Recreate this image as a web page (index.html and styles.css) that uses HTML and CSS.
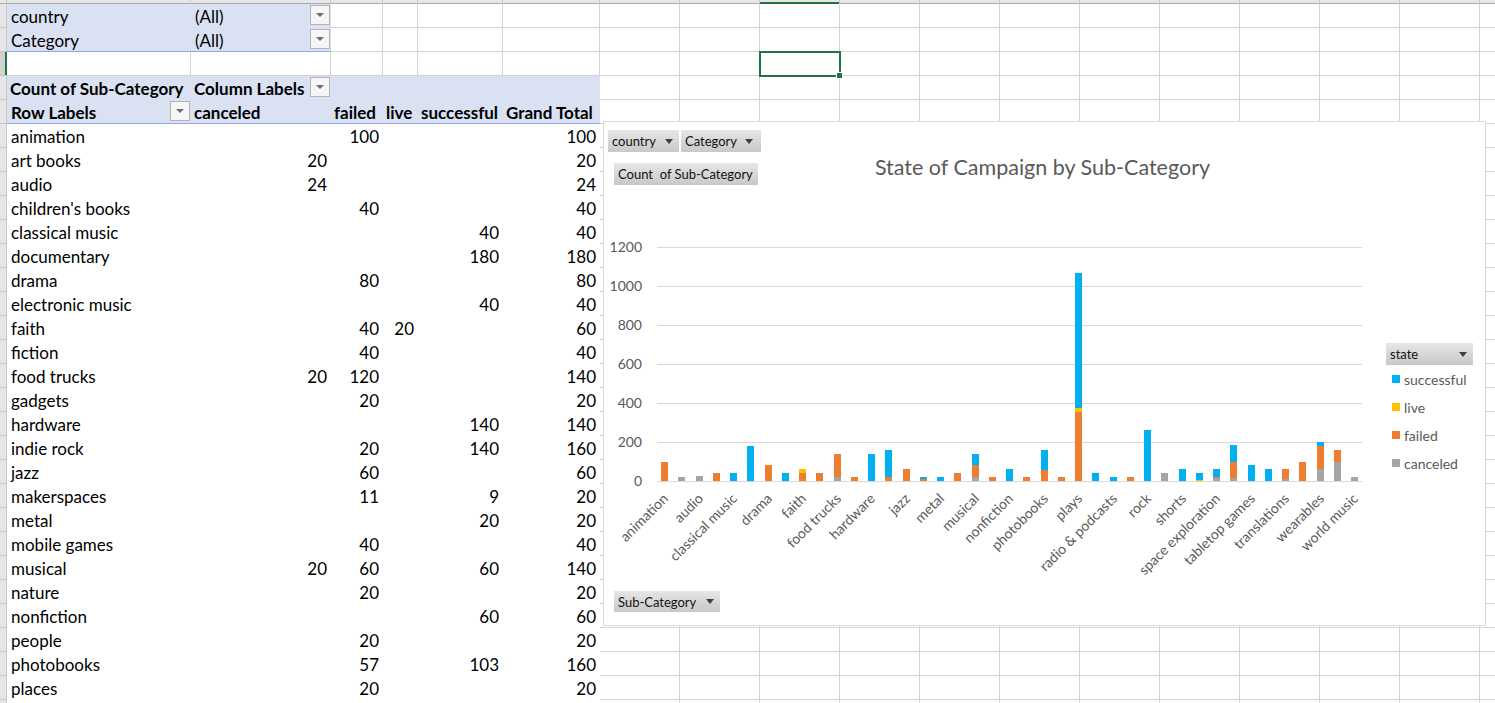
FILE: index.html
```html
<!DOCTYPE html>
<html lang="en">
<head>
    <meta charset="UTF-8">
    <meta name="viewport" content="width=device-width, initial-scale=1.0">
    <title>State of Campaign by Sub-Category</title>
    <link rel="stylesheet" href="styles.css">
</head>
<body>
<div class="sheet">
    <div class="col-heads">
        <span class="corner"></span>
        <span class="ca"></span><span class="cb"></span><span class="cc"></span><span class="cd"></span><span class="ce"></span><span class="cf"></span>
        <span class="cg"></span><span class="cg"></span><span class="cg cur"></span><span class="cg"></span><span class="cg"></span><span class="cg"></span>
        <span class="cg"></span><span class="cg"></span><span class="cg"></span><span class="cg"></span><span class="cg"></span><span class="cg"></span>
    </div>
    <div class="sheet-body">
        <div class="row-heads">
            <span class="rh"></span>
            <span class="rh"></span>
            <span class="rh cur"></span>
            <span class="rh-rest"></span>
        </div>
        <div class="cells">
            <table class="pivot">
                <colgroup>
                    <col class="ca"><col class="cb"><col class="cc"><col class="cd"><col class="ce"><col class="cf">
                </colgroup>
                <tr class="filter">
                    <td class="fl">country</td>
                    <td class="fl dd-cell"><div class="fc"><span>(All)</span><i class="dd"></i></div></td>
                    <td class="g"></td><td class="g"></td><td class="g"></td><td class="g"></td>
                </tr>
                <tr class="filter last">
                    <td class="fl">Category</td>
                    <td class="fl dd-cell"><div class="fc"><span>(All)</span><i class="dd"></i></div></td>
                    <td class="g"></td><td class="g"></td><td class="g"></td><td class="g"></td>
                </tr>
                <tr>
                    <td class="g"></td><td class="g"></td><td class="g"></td><td class="g"></td><td class="g"></td><td class="g"></td>
                </tr>
                <tr class="hd">
                    <td>Count of Sub-Category</td>
                    <td class="dd-cell"><div class="fc"><span>Column Labels</span><i class="dd"></i></div></td>
                    <td></td><td></td><td></td><td></td>
                </tr>
                <tr class="hd last">
                    <td class="dd-cell"><div class="fc"><span>Row Labels</span><i class="dd"></i></div></td>
                    <td>canceled</td>
                    <td>failed</td>
                    <td>live</td>
                    <td>successful</td>
                    <td>Grand Total</td>
                </tr>
                <tr class="d"><td>animation</td><td></td><td class="n">100</td><td></td><td></td><td class="n">100</td></tr>
                <tr class="d"><td>art books</td><td class="n">20</td><td></td><td></td><td></td><td class="n">20</td></tr>
                <tr class="d"><td>audio</td><td class="n">24</td><td></td><td></td><td></td><td class="n">24</td></tr>
                <tr class="d"><td>children's books</td><td></td><td class="n">40</td><td></td><td></td><td class="n">40</td></tr>
                <tr class="d"><td>classical music</td><td></td><td></td><td></td><td class="n">40</td><td class="n">40</td></tr>
                <tr class="d"><td>documentary</td><td></td><td></td><td></td><td class="n">180</td><td class="n">180</td></tr>
                <tr class="d"><td>drama</td><td></td><td class="n">80</td><td></td><td></td><td class="n">80</td></tr>
                <tr class="d"><td>electronic music</td><td></td><td></td><td></td><td class="n">40</td><td class="n">40</td></tr>
                <tr class="d"><td>faith</td><td></td><td class="n">40</td><td class="n">20</td><td></td><td class="n">60</td></tr>
                <tr class="d"><td>fiction</td><td></td><td class="n">40</td><td></td><td></td><td class="n">40</td></tr>
                <tr class="d"><td>food trucks</td><td class="n">20</td><td class="n">120</td><td></td><td></td><td class="n">140</td></tr>
                <tr class="d"><td>gadgets</td><td></td><td class="n">20</td><td></td><td></td><td class="n">20</td></tr>
                <tr class="d"><td>hardware</td><td></td><td></td><td></td><td class="n">140</td><td class="n">140</td></tr>
                <tr class="d"><td>indie rock</td><td></td><td class="n">20</td><td></td><td class="n">140</td><td class="n">160</td></tr>
                <tr class="d"><td>jazz</td><td></td><td class="n">60</td><td></td><td></td><td class="n">60</td></tr>
                <tr class="d"><td>makerspaces</td><td></td><td class="n">11</td><td></td><td class="n">9</td><td class="n">20</td></tr>
                <tr class="d"><td>metal</td><td></td><td></td><td></td><td class="n">20</td><td class="n">20</td></tr>
                <tr class="d"><td>mobile games</td><td></td><td class="n">40</td><td></td><td></td><td class="n">40</td></tr>
                <tr class="d"><td>musical</td><td class="n">20</td><td class="n">60</td><td></td><td class="n">60</td><td class="n">140</td></tr>
                <tr class="d"><td>nature</td><td></td><td class="n">20</td><td></td><td></td><td class="n">20</td></tr>
                <tr class="d"><td>nonfiction</td><td></td><td></td><td></td><td class="n">60</td><td class="n">60</td></tr>
                <tr class="d"><td>people</td><td></td><td class="n">20</td><td></td><td></td><td class="n">20</td></tr>
                <tr class="d"><td>photobooks</td><td></td><td class="n">57</td><td></td><td class="n">103</td><td class="n">160</td></tr>
                <tr class="d"><td>places</td><td></td><td class="n">20</td><td></td><td></td><td class="n">20</td></tr>
                <tr class="d"><td></td><td></td><td></td><td></td><td></td><td></td></tr>
            </table>

            <div class="cell-select"><span class="handle"></span></div>

            <div class="chart">
                <div class="chart-head">
                    <div class="fields">
                        <div class="btn-row">
                            <div class="btn w-country">country<i class="tri"></i></div>
                            <div class="btn w-category">Category<i class="tri"></i></div>
                        </div>
                        <div class="btn w-count">Count&nbsp; of Sub-Category</div>
                    </div>
                    <div class="chart-title">State of Campaign by Sub-Category</div>
                </div>

                <div class="chart-body">
                    <svg class="plot" width="770" height="355" viewBox="604 232 770 355">
                        <g class="grid">
                            <line x1="657" x2="1362" y1="247.5" y2="247.5"/>
                            <line x1="657" x2="1362" y1="286.5" y2="286.5"/>
                            <line x1="657" x2="1362" y1="325.5" y2="325.5"/>
                            <line x1="657" x2="1362" y1="364.5" y2="364.5"/>
                            <line x1="657" x2="1362" y1="403.5" y2="403.5"/>
                            <line x1="657" x2="1362" y1="442.5" y2="442.5"/>
                            <line x1="657" x2="1362" y1="481.5" y2="481.5"/>
                        </g>
                        <g class="y-labels">
                            <text x="642" y="252">1200</text>
                            <text x="642" y="291">1000</text>
                            <text x="642" y="330">800</text>
                            <text x="642" y="369">600</text>
                            <text x="642" y="408">400</text>
                            <text x="642" y="447">200</text>
                            <text x="642" y="486">0</text>
                        </g>
                        <!-- stacked bars, in data units: canceled, failed, live, successful -->
                        <g class="bars" transform="translate(0 481) scale(1 -0.195)">
                            <rect class="f" x="661" y="0" width="7" height="100"/>
                            <rect class="c" x="678" y="0" width="7" height="20"/>
                            <rect class="c" x="696" y="0" width="7" height="24"/>
                            <rect class="f" x="713" y="0" width="7" height="40"/>
                            <rect class="s" x="730" y="0" width="7" height="40"/>
                            <rect class="s" x="747" y="0" width="7" height="180"/>
                            <rect class="f" x="765" y="0" width="7" height="80"/>
                            <rect class="s" x="782" y="0" width="7" height="40"/>
                            <rect class="f" x="799" y="0" width="7" height="40"/>
                            <rect class="l" x="799" y="40" width="7" height="20"/>
                            <rect class="f" x="816" y="0" width="7" height="40"/>
                            <rect class="c" x="834" y="0" width="7" height="20"/>
                            <rect class="f" x="834" y="20" width="7" height="120"/>
                            <rect class="f" x="851" y="0" width="7" height="20"/>
                            <rect class="s" x="868" y="0" width="7" height="140"/>
                            <rect class="f" x="885" y="0" width="7" height="20"/>
                            <rect class="s" x="885" y="20" width="7" height="140"/>
                            <rect class="f" x="903" y="0" width="7" height="60"/>
                            <rect class="f" x="920" y="0" width="7" height="11"/>
                            <rect class="s" x="920" y="11" width="7" height="9"/>
                            <rect class="s" x="937" y="0" width="7" height="20"/>
                            <rect class="f" x="954" y="0" width="7" height="40"/>
                            <rect class="c" x="972" y="0" width="7" height="20"/>
                            <rect class="f" x="972" y="20" width="7" height="60"/>
                            <rect class="s" x="972" y="80" width="7" height="60"/>
                            <rect class="f" x="989" y="0" width="7" height="20"/>
                            <rect class="s" x="1006" y="0" width="7" height="60"/>
                            <rect class="f" x="1023" y="0" width="7" height="20"/>
                            <rect class="f" x="1041" y="0" width="7" height="57"/>
                            <rect class="s" x="1041" y="57" width="7" height="103"/>
                            <rect class="f" x="1058" y="0" width="7" height="20"/>
                            <rect class="f" x="1075" y="0" width="7" height="353"/>
                            <rect class="l" x="1075" y="353" width="7" height="20"/>
                            <rect class="s" x="1075" y="373" width="7" height="694"/>
                            <rect class="s" x="1092" y="0" width="7" height="40"/>
                            <rect class="s" x="1110" y="0" width="7" height="20"/>
                            <rect class="f" x="1127" y="0" width="7" height="20"/>
                            <rect class="s" x="1144" y="0" width="7" height="260"/>
                            <rect class="c" x="1161" y="0" width="7" height="40"/>
                            <rect class="s" x="1179" y="0" width="7" height="60"/>
                            <rect class="l" x="1196" y="0" width="7" height="4"/>
                            <rect class="s" x="1196" y="4" width="7" height="36"/>
                            <rect class="c" x="1213" y="0" width="7" height="16"/>
                            <rect class="f" x="1213" y="16" width="7" height="4"/>
                            <rect class="s" x="1213" y="20" width="7" height="40"/>
                            <rect class="c" x="1230" y="0" width="7" height="15"/>
                            <rect class="f" x="1230" y="15" width="7" height="82"/>
                            <rect class="s" x="1230" y="97" width="7" height="87"/>
                            <rect class="s" x="1248" y="0" width="7" height="80"/>
                            <rect class="s" x="1265" y="0" width="7" height="60"/>
                            <rect class="c" x="1282" y="0" width="7" height="10"/>
                            <rect class="f" x="1282" y="10" width="7" height="50"/>
                            <rect class="f" x="1299" y="0" width="7" height="100"/>
                            <rect class="c" x="1317" y="0" width="7" height="60"/>
                            <rect class="f" x="1317" y="60" width="7" height="120"/>
                            <rect class="s" x="1317" y="180" width="7" height="20"/>
                            <rect class="c" x="1334" y="0" width="7" height="100"/>
                            <rect class="f" x="1334" y="100" width="7" height="60"/>
                            <rect class="c" x="1351" y="0" width="7" height="20"/>
                        </g>
                        <g class="x-labels">
                            <text transform="translate(669 499.5) rotate(-45)">animation</text>
                            <text transform="translate(704 499.5) rotate(-45)">audio</text>
                            <text transform="translate(738 499.5) rotate(-45)">classical music</text>
                            <text transform="translate(773 499.5) rotate(-45)">drama</text>
                            <text transform="translate(807 499.5) rotate(-45)">faith</text>
                            <text transform="translate(842 499.5) rotate(-45)">food trucks</text>
                            <text transform="translate(876 499.5) rotate(-45)">hardware</text>
                            <text transform="translate(911 499.5) rotate(-45)">jazz</text>
                            <text transform="translate(945 499.5) rotate(-45)">metal</text>
                            <text transform="translate(980 499.5) rotate(-45)">musical</text>
                            <text transform="translate(1014 499.5) rotate(-45)">nonfiction</text>
                            <text transform="translate(1049 499.5) rotate(-45)">photobooks</text>
                            <text transform="translate(1083 499.5) rotate(-45)">plays</text>
                            <text transform="translate(1118 499.5) rotate(-45)">radio &amp; podcasts</text>
                            <text transform="translate(1152 499.5) rotate(-45)">rock</text>
                            <text transform="translate(1187 499.5) rotate(-45)">shorts</text>
                            <text transform="translate(1221 499.5) rotate(-45)">space exploration</text>
                            <text transform="translate(1256 499.5) rotate(-45)">tabletop games</text>
                            <text transform="translate(1290 499.5) rotate(-45)">translations</text>
                            <text transform="translate(1325 499.5) rotate(-45)">wearables</text>
                            <text transform="translate(1359 499.5) rotate(-45)">world music</text>
                        </g>
                    </svg>

                    <div class="legend">
                        <div class="btn w-state">state<i class="tri"></i></div>
                        <ul>
                            <li><i class="sw s"></i>successful</li>
                            <li><i class="sw l"></i>live</li>
                            <li><i class="sw f"></i>failed</li>
                            <li><i class="sw c"></i>canceled</li>
                        </ul>
                    </div>
                </div>

                <div class="chart-foot">
                    <div class="btn w-sub">Sub-Category<i class="tri"></i></div>
                </div>
            </div>
        </div>
    </div>
</div>
</body>
</html>
```

FILE: styles.css
```css
body {
    margin: 0;
    font-family: Lato, "Liberation Sans", sans-serif;
    font-size: 17px;
    color: #000;
    background-color: #fff;
    overflow: hidden;
}

/* column widths, shared by the headers and the pivot table */
.ca { width: 184px; }
.cb { width: 140px; }
.cc { width: 52px; }
.cd { width: 35px; }
.ce { width: 85px; }
.cf { width: 97px; }
.cg { width: 80px; }

.sheet {
    height: 703px;
    display: flex;
    flex-direction: column;
    overflow: hidden;
}

.col-heads {
    display: flex;
    flex: none;
    height: 4px;
    background-color: #e6e6e6;
    box-shadow: inset 0 -1px #ababab;
}

.col-heads span {
    flex: none;
    height: 4px;
    box-sizing: border-box;
    border-right: 1px solid #c6c6c6;
}

.col-heads .corner {
    width: 7px;
}

.col-heads .cur {
    box-shadow: inset 0 -2px #217346;
}

.sheet-body {
    flex: 1;
    display: flex;
    min-height: 0;
    overflow: hidden;
}

.row-heads {
    flex: none;
    width: 7px;
    display: flex;
    flex-direction: column;
    background-color: #e6e6e6;
    box-shadow: inset -1px 0 #c6c6c6;
}

.rh {
    flex: none;
    height: 24px;
    box-sizing: border-box;
    border-bottom: 1px solid #c6c6c6;
}

.rh.cur {
    background-color: #d2d2d2;
    box-shadow: inset -2px 0 #217346;
}

.rh-rest {
    flex: 1;
    background: repeating-linear-gradient(to bottom, transparent 0 23px, #c6c6c6 23px 24px);
}

.cells {
    flex: 1;
    position: relative;
    background-image:
        linear-gradient(to bottom, transparent 23px, #d4d4d4 23px),
        linear-gradient(to right, transparent 79px, #d4d4d4 79px);
    background-size: 100% 24px, 80px 100%;
    background-position: 0 0, 593px 0;
}

/* pivot table */
.pivot {
    width: 593px;
    table-layout: fixed;
    border-collapse: separate;
    border-spacing: 0;
}

.pivot td {
    height: 24px;
    padding: 2px 3px 0 4px;
    box-sizing: border-box;
    line-height: 22px;
    white-space: nowrap;
    overflow: visible;
    vertical-align: top;
}

.pivot td.n {
    text-align: right;
    padding-right: 4px;
}

.pivot td.g {
    background-color: #fff;
    box-shadow: inset -1px -1px #d4d4d4;
}

.pivot .filter td.fl {
    background-color: #d9e1f2;
}

.pivot .filter.last td.fl {
    box-shadow: inset 0 -1px #8ea9db;
}

.pivot .hd td {
    background-color: #d9e1f2;
    font-weight: bold;
    padding-left: 3px;
}

.pivot .hd.last td {
    box-shadow: inset 0 -1px #8ea9db;
}

.pivot .hd.last td:first-child {
    padding-left: 4px;
}

.pivot .d td {
    background-color: #fff;
}

.pivot td.dd-cell {
    padding-right: 1px;
}

.fc {
    display: flex;
    justify-content: space-between;
    align-items: flex-start;
}

.dd {
    width: 20px;
    height: 20px;
    margin-top: -1px;
    box-sizing: border-box;
    border: 1px solid #b4b4b4;
    background-color: #f6f6f6;
    display: flex;
    align-items: center;
    justify-content: center;
}

.dd::after {
    content: "";
    border-left: 4px solid transparent;
    border-right: 4px solid transparent;
    border-top: 4px solid #6e6e6e;
}

.cell-select {
    position: absolute;
    left: 752px;
    top: 47px;
    width: 82px;
    height: 26px;
    border: 2px solid #217346;
    box-sizing: border-box;
}

.cell-select .handle {
    position: absolute;
    right: -4px;
    bottom: -4px;
    width: 5px;
    height: 5px;
    background-color: #217346;
    border: 1px solid #fff;
}

/* pivot chart */
.chart {
    position: absolute;
    left: 596px;
    top: 117px;
    width: 883px;
    height: 505px;
    box-sizing: border-box;
    border: 1px solid #d9d9d9;
    background-color: #fff;
    display: flex;
    flex-direction: column;
}

.chart-head {
    flex: none;
    height: 110px;
    display: grid;
    grid-template-columns: 158px 1fr 162px;
}

.fields {
    padding: 8px 0 0 4px;
}

.btn-row {
    display: flex;
    gap: 2px;
}

.btn {
    height: 22px;
    box-sizing: border-box;
    padding: 0 6px 0 4px;
    display: flex;
    align-items: center;
    justify-content: space-between;
    white-space: nowrap;
    font-size: 13px;
    color: #111;
    background: linear-gradient(#e6e6e6, #c8c8c8);
}

.tri {
    border-left: 4px solid transparent;
    border-right: 4px solid transparent;
    border-top: 5px solid #3f3f3f;
}

.w-country { width: 71px; }
.w-category { width: 80px; padding-right: 8px; }
.w-count { width: 144px; margin: 11px 0 0 6px; }
.w-state { width: 87px; }
.w-sub { width: 106px; height: 21px; }

.chart-title {
    grid-column: 2;
    padding-top: 32px;
    text-align: center;
    white-space: nowrap;
    font-size: 21.5px;
    line-height: 26px;
    color: #595959;
}

.chart-body {
    flex: none;
    height: 355px;
    display: flex;
}

.plot {
    flex: none;
    display: block;
}

.plot text {
    font-family: Lato, "Liberation Sans", sans-serif;
    font-size: 14px;
    fill: #595959;
}

.plot .grid line {
    stroke: #d9d9d9;
    stroke-width: 1;
}

.plot .y-labels text,
.plot .x-labels text {
    text-anchor: end;
}

.bars rect {
    shape-rendering: crispEdges;
}

.c { fill: #a5a5a5; background-color: #a5a5a5; }
.f { fill: #ed7d31; background-color: #ed7d31; }
.l { fill: #ffc000; background-color: #ffc000; }
.s { fill: #00b0f0; background-color: #00b0f0; }

.legend {
    padding: 111px 0 0 12px;
}

.legend ul {
    list-style: none;
    margin: 0;
    padding: 0 0 0 6px;
}

.legend li {
    height: 28px;
    display: flex;
    align-items: center;
    gap: 4px;
    font-size: 14px;
    color: #595959;
}

.sw {
    width: 8px;
    height: 8px;
}

.chart-foot {
    padding: 4px 0 0 10px;
}
```
